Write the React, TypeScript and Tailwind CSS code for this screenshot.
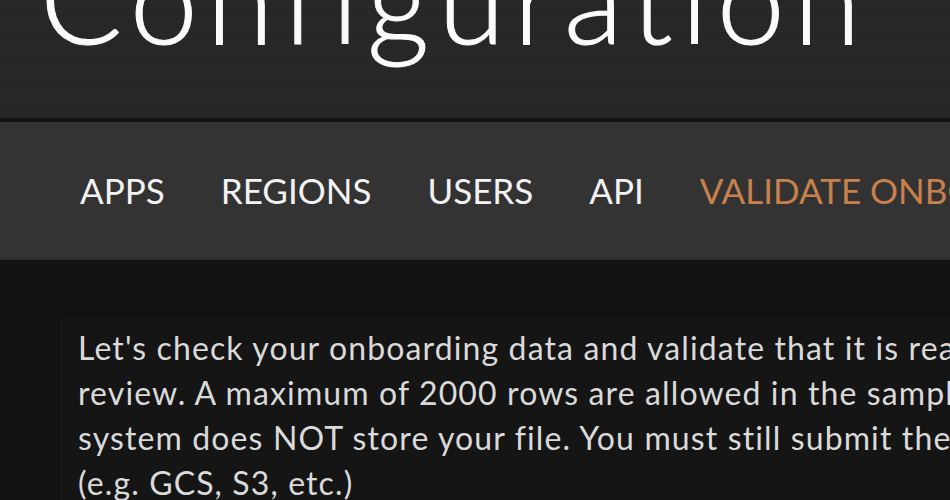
import React from 'react';

const navItems = ['APPS', 'REGIONS', 'USERS', 'API', 'VALIDATE ONBOARDING DATA'];

const lines = [
  "Let's check your onboarding data and validate that it is ready for",
  'review. A maximum of 2000 rows are allowed in the sample file. The',
  'system does NOT store your file. You must still submit the validated file',
  '(e.g. GCS, S3, etc.)',
];

export default function App() {
  return (
    <div className="w-[950px] h-[500px] overflow-hidden bg-[#121212] font-['Lato','Liberation_Sans',sans-serif]">
      {/* page header */}
      <header className="h-[118px] overflow-hidden bg-[#272727] bg-[repeating-linear-gradient(0deg,#262626_0px,#262626_2px,#2a2a2a_2px,#2a2a2a_3px)] pl-[40px]">
        <h1 className="-mt-[64px] text-[122px] leading-none font-light tracking-[0.07em] text-[#fbfbfb] [-webkit-text-stroke:1px_#fbfbfb] whitespace-nowrap">
          Configuration
        </h1>
      </header>
      <div className="h-[4px] bg-[#141414]" />

      {/* tabs */}
      <nav className="h-[138px] bg-[#333333] border-b-2 border-[#2b2b2b] flex items-center pl-[80px] gap-[56px] whitespace-nowrap">
        {navItems.map((item, i) => (
          <span
            key={item}
            className={`text-[35px] leading-none ${
              i === navItems.length - 1 ? 'text-[#c8804c]' : 'text-[#f2f2f2]'
            }`}
          >
            {item}
          </span>
        ))}
      </nav>

      {/* body */}
      <main className="pt-[58px] pl-[60px]">
        <div className="bg-[#151515] pl-[18px] pt-[7px] w-[1200px] h-[300px]">
          <p className="text-[32px] leading-[45px] tracking-[0.035em] text-[#dadada] whitespace-nowrap">
            {lines.map((line) => (
              <React.Fragment key={line}>
                {line}
                <br />
              </React.Fragment>
            ))}
          </p>
        </div>
      </main>
    </div>
  );
}
